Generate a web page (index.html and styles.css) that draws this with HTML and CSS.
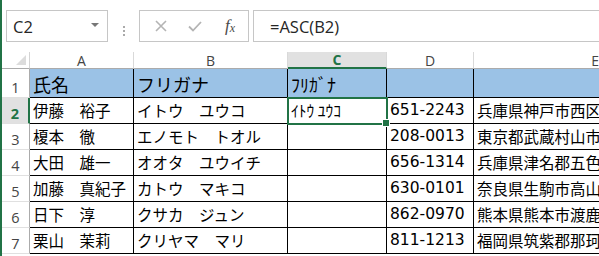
FILE: index.html
```html
<!DOCTYPE html>
<html lang="ja">
<head>
<meta charset="utf-8">
<link rel="stylesheet" href="styles.css">
</head>
<body>
<div class="app">
  <div class="toolbar">
    <div class="namebox"><span class="nb-text">C2</span><span class="nb-arrow"></span></div>
    <div class="vdots"><i></i><i></i><i></i></div>
    <div class="fbtns">
      <svg class="ico" width="14" height="14" viewBox="0 0 14 14"><path d="M2 2 L12 12 M12 2 L2 12" stroke="#b4b4b4" stroke-width="1.6" fill="none"/></svg>
      <svg class="ico" width="16" height="14" viewBox="0 0 16 14"><path d="M2 7.5 L6 11.5 L14 3" stroke="#b4b4b4" stroke-width="1.8" fill="none"/></svg>
      <span class="fx">f<sub>x</sub></span>
    </div>
    <div class="fbar">=ASC(B2)</div>
  </div>
  <div class="sheet">
    <div class="corner"><span class="tri"></span></div>
    <div class="ch">A</div>
    <div class="ch">B</div>
    <div class="ch sel">C</div>
    <div class="ch">D</div>
    <div class="ch last">E</div>

    <div class="rh r1">1</div>
    <div class="c hd">氏名</div>
    <div class="c hd">フリガナ</div>
    <div class="c hd">ﾌﾘｶﾞﾅ</div>
    <div class="c hd"></div>
    <div class="c hd last"></div>

    <div class="rh sel">2</div>
    <div class="c">伊藤　裕子</div>
    <div class="c">イトウ　ユウコ</div>
    <div class="c active">ｲﾄｳ ﾕｳｺ<span class="handle"></span></div>
    <div class="c num">651-2243</div>
    <div class="c last">兵庫県神戸市西区</div>

    <div class="rh">3</div>
    <div class="c">榎本　徹</div>
    <div class="c">エノモト　トオル</div>
    <div class="c"></div>
    <div class="c num">208-0013</div>
    <div class="c last">東京都武蔵村山市</div>

    <div class="rh">4</div>
    <div class="c">大田　雄一</div>
    <div class="c">オオタ　ユウイチ</div>
    <div class="c"></div>
    <div class="c num">656-1314</div>
    <div class="c last">兵庫県津名郡五色</div>

    <div class="rh">5</div>
    <div class="c">加藤　真紀子</div>
    <div class="c">カトウ　マキコ</div>
    <div class="c"></div>
    <div class="c num">630-0101</div>
    <div class="c last">奈良県生駒市高山</div>

    <div class="rh">6</div>
    <div class="c">日下　淳</div>
    <div class="c">クサカ　ジュン</div>
    <div class="c"></div>
    <div class="c num">862-0970</div>
    <div class="c last">熊本県熊本市渡鹿</div>

    <div class="rh">7</div>
    <div class="c">栗山　茉莉</div>
    <div class="c">クリヤマ　マリ</div>
    <div class="c"></div>
    <div class="c num">811-1213</div>
    <div class="c last">福岡県筑紫郡那珂</div>
  </div>
</div>
</body>
</html>
```
FILE: styles.css
```css
html, body {
  margin: 0;
  padding: 0;
  background: #fff;
  overflow: hidden;
}
.app {
  width: 599px;
  height: 256px;
  border-left: 2px solid #217346;
  box-sizing: border-box;
  overflow: hidden;
}
.toolbar {
  display: flex;
  align-items: stretch;
  height: 52px;
  padding: 10px 0 0 4px;
  box-sizing: border-box;
}
.namebox {
  width: 102px;
  height: 32px;
  border: 1px solid #c6c6c6;
  box-sizing: border-box;
  display: flex;
  align-items: center;
  justify-content: space-between;
  padding: 0 8px 0 6px;
  font-family: "Open Sans", "Noto Sans", sans-serif;
  font-size: 16.5px;
  color: #262626;
}
.nb-arrow {
  width: 0;
  height: 0;
  border-left: 4px solid transparent;
  border-right: 4px solid transparent;
  border-top: 4px solid #777;
  margin-top: -2px;
}
.vdots {
  width: 31px;
  display: flex;
  flex-direction: column;
  align-items: center;
  justify-content: center;
  gap: 2px;
  padding-bottom: 1px;
}
.vdots i {
  display: block;
  width: 2px;
  height: 2px;
  background: #aaa;
}
.fbtns {
  width: 110px;
  height: 32px;
  border: 1px solid #c6c6c6;
  box-sizing: border-box;
  display: flex;
  align-items: center;
  padding: 0 0 0 14px;
  gap: 20px;
}
.fbtns .ico { display: block; }
.fbtns svg:nth-child(2) { margin-left: -1px; }
.fx {
  font-family: "Liberation Serif", "DejaVu Serif", serif;
  font-style: italic;
  font-size: 17px;
  color: #4a4a4a;
  margin-left: 2px;
}
.fx sub {
  font-size: 12px;
  vertical-align: -1px;
}
.fbar {
  flex: 1;
  height: 32px;
  margin-left: 4px;
  border-top: 1px solid #c6c6c6;
  border-bottom: 1px solid #c6c6c6;
  border-left: 1px solid #c6c6c6;
  box-sizing: border-box;
  display: flex;
  align-items: center;
  padding-left: 16px;
  font-family: "Open Sans", "Noto Sans", sans-serif;
  font-size: 16.5px;
  color: #262626;
}
.sheet {
  display: grid;
  grid-template-columns: 28px 104px 154px 99px 87px 1fr;
  grid-template-rows: 17px 29px repeat(6, 26px);
}
.corner, .ch, .rh {
  box-sizing: border-box;
  font-family: "Open Sans", "Noto Sans", sans-serif;
  font-size: 14px;
  color: #444;
}
.corner {
  border-right: 1px solid #d4d4d4;
  border-bottom: 1px solid #ababab;
  position: relative;
}
.tri {
  position: absolute;
  right: 3px;
  bottom: 3px;
  width: 0;
  height: 0;
  border-left: 10px solid transparent;
  border-bottom: 10px solid #dcdcdc;
}
.ch {
  border-right: 1px solid #d9d9d9;
  border-bottom: 1px solid #ababab;
  display: flex;
  align-items: center;
  justify-content: center;
  line-height: 1;
  padding-top: 1px;
}
.ch.last { border-right: none; justify-content: flex-end; padding-right: 0; }
.ch.sel {
  background: #e1e1e1;
  color: #217346;
  font-weight: 700;
  border-bottom: 2px solid #217346;
}
.rh {
  border-right: 1px solid #ababab;
  border-bottom: 1px solid #e0e0e0;
  display: flex;
  align-items: flex-end;
  justify-content: center;
  padding-bottom: 2px;
  line-height: 1;
  font-size: 14.5px;
}
.rh.sel {
  background: #e1e1e1;
  color: #217346;
  font-weight: 700;
  border-right: 2px solid #217346;
}
.c {
  box-sizing: border-box;
  border-right: 1px solid #000;
  border-bottom: 1px solid #000;
  font-family: "Noto Sans CJK JP", sans-serif;
  font-size: 15.5px;
  color: #000;
  display: flex;
  align-items: center;
  padding: 1px 0 0 3px;
  white-space: nowrap;
  overflow: hidden;
  line-height: 1;
}
.c.last { border-right: none; }
.c.hd {
  background: #9bc2e6;
  font-size: 18px;
  padding-top: 2px;
}
.c.num {
  font-family: "DejaVu Sans", "Noto Sans", sans-serif;
  font-size: 15.5px;
  padding-left: 3px;
}
.c.active {
  position: relative;
  overflow: visible;
  outline: 2px solid #217346;
  outline-offset: -1px;
  z-index: 2;
}
.handle {
  position: absolute;
  right: -4px;
  bottom: -4px;
  width: 6px;
  height: 6px;
  background: #217346;
  border: 1px solid #fff;
}
```
